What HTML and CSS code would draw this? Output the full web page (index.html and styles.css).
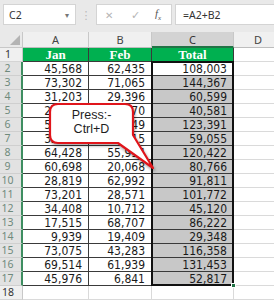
FILE: index.html
```html
<!DOCTYPE html>
<html>
<head>
<meta charset="utf-8">
<link rel="stylesheet" href="styles.css">
</head>
<body>
<div class="toolbar">
  <div class="namebox"><span class="ref">C2</span><span class="drop">▾</span></div>
  <div class="sep">⋮</div>
  <div class="fbtns"><span class="x">✕</span><span class="ok">✓</span><span class="fx">f<sub>x</sub></span></div>
  <div class="finput">=A2+B2</div>
</div>
<div class="sheet">
  <div class="corner"><svg width="10" height="10" viewBox="0 0 10 10"><path d="M10 0 L10 10 L0 10 Z" fill="#b4b4b4"/></svg></div>
  <div class="ch">A</div><div class="ch">B</div><div class="ch sel">C</div><div class="ch last">D</div>

  <div class="rh">1</div><div class="c hd">Jan</div><div class="c hd">Feb</div><div class="c hd">Total</div><div class="e"></div>

  <div class="rh s">2</div><div class="c">45,568</div><div class="c">62,435</div><div class="c t act">108,003</div><div class="e"></div>
  <div class="rh s">3</div><div class="c">73,302</div><div class="c">71,065</div><div class="c t">144,367</div><div class="e"></div>
  <div class="rh s">4</div><div class="c">31,203</div><div class="c">29,396</div><div class="c t">60,599</div><div class="e"></div>
  <div class="rh s">5</div><div class="c">20,011</div><div class="c">20,570</div><div class="c t">40,581</div><div class="e"></div>
  <div class="rh s">6</div><div class="c">57,342</div><div class="c">66,049</div><div class="c t">123,391</div><div class="e"></div>
  <div class="rh s">7</div><div class="c">32,140</div><div class="c">26,915</div><div class="c t">59,055</div><div class="e"></div>
  <div class="rh s">8</div><div class="c">64,428</div><div class="c">55,994</div><div class="c t">120,422</div><div class="e"></div>
  <div class="rh s">9</div><div class="c">60,698</div><div class="c">20,068</div><div class="c t">80,766</div><div class="e"></div>
  <div class="rh s">10</div><div class="c">28,819</div><div class="c">62,992</div><div class="c t">91,811</div><div class="e"></div>
  <div class="rh s">11</div><div class="c">73,201</div><div class="c">28,571</div><div class="c t">101,772</div><div class="e"></div>
  <div class="rh s">12</div><div class="c">34,408</div><div class="c">10,712</div><div class="c t">45,120</div><div class="e"></div>
  <div class="rh s">13</div><div class="c">17,515</div><div class="c">68,707</div><div class="c t">86,222</div><div class="e"></div>
  <div class="rh s">14</div><div class="c">9,939</div><div class="c">19,409</div><div class="c t">29,348</div><div class="e"></div>
  <div class="rh s">15</div><div class="c">73,075</div><div class="c">43,283</div><div class="c t">116,358</div><div class="e"></div>
  <div class="rh s">16</div><div class="c">69,514</div><div class="c">61,939</div><div class="c t">131,453</div><div class="e"></div>
  <div class="rh s">17</div><div class="c">45,976</div><div class="c">6,841</div><div class="c t">52,817</div><div class="e"></div>

  <div class="rh">18</div><div class="e"></div><div class="e"></div><div class="e"></div><div class="e"></div>

  <div class="selection"><div class="handle"></div></div>

  <div class="callout">
    <svg class="bubble" width="115" height="75" viewBox="0 0 115 75">
      <path d="M12 4 H79 Q87 4 87 12 V35 L107 68 L72 43 H12 Q4 43 4 35 V12 Q4 4 12 4 Z" fill="#ffffff" stroke="#e0151b" stroke-width="2.2" stroke-linejoin="round"/>
    </svg>
    <div class="ctext">Press:-<br>Ctrl+D</div>
  </div>
</div>
</body>
</html>
```

FILE: styles.css
```css
* { box-sizing: border-box; }
html, body { margin: 0; padding: 0; }
body {
  width: 274px;
  height: 300px;
  overflow: hidden;
  background: #ffffff;
  font-family: "Noto Sans", "DejaVu Sans", sans-serif;
}

.toolbar {
  height: 32px;
  background: #e9e9e9;
  display: flex;
  align-items: flex-start;
  padding: 4px 0 0 3px;
}
.namebox {
  width: 73px;
  height: 21px;
  background: #fff;
  border: 1px solid #d4d4d4;
  display: flex;
  align-items: center;
  justify-content: space-between;
  padding: 0 6px 0 5px;
  font-size: 10.5px;
  color: #333;
}
.drop { font-size: 8px; color: #777; }
.sep {
  width: 20px;
  height: 21px;
  display: flex;
  align-items: center;
  justify-content: center;
  color: #b8b8b8;
  font-size: 11px;
}
.fbtns {
  width: 76px;
  height: 21px;
  background: #fff;
  border: 1px solid #d4d4d4;
  display: flex;
  align-items: center;
  padding-left: 8px;
  font-size: 11px;
}
.fbtns .x { color: #b5b5b5; width: 26px; font-size: 10px; }
.fbtns .ok { color: #b5b5b5; width: 24px; font-size: 11px; }
.fbtns .fx { font-family: "Liberation Serif", serif; font-style: italic; color: #555; font-size: 11px; }
.fbtns .fx sub { font-size: 7px; }
.finput {
  flex: 1;
  margin-left: 3px;
  height: 21px;
  background: #fff;
  border: 1px solid #d4d4d4;
  border-right: none;
  display: flex;
  align-items: center;
  padding-left: 7px;
  font-size: 10.5px;
  color: #333;
}

.sheet {
  position: relative;
  display: grid;
  grid-template-columns: 23px 66px 63px 82px 48px;
  grid-template-rows: 16px repeat(18, 14px);
}

.corner {
  background: #e9e9e9;
  border-right: 1px solid #c8c8c8;
  border-bottom: 1px solid #c8c8c8;
  display: flex;
  align-items: flex-end;
  justify-content: flex-end;
  padding: 0 2px 2px 0;
}
.ch {
  background: #f0f0f0;
  border-right: 1px solid #c8c8c8;
  border-bottom: 1px solid #bdbdbd;
  font-size: 11px;
  color: #444;
  text-align: center;
  line-height: 15px;
}
.ch.sel {
  background: #d3d3d3;
  border-bottom: 2px solid #217346;
  color: #333;
}
.ch.last { border-right: none; }

.rh {
  background: #f0f0f0;
  border-right: 1px solid #c8c8c8;
  border-bottom: 1px solid #d4d4d4;
  font-size: 10.5px;
  color: #333;
  text-align: center;
  line-height: 13px;
  padding-right: 6px;
}
.rh.s {
  background: #e2e2e2;
  color: #6f8a7c;
  border-right: 2px solid #3e8e61;
  border-bottom-color: #cfcfcf;
}

.c {
  border-right: 1px solid #3a3a3a;
  border-bottom: 1px solid #3a3a3a;
  font-family: "DejaVu Sans Condensed", "DejaVu Sans", sans-serif;
  font-size: 12px;
  color: #1a1a1a;
  text-align: right;
  padding-right: 6px;
  line-height: 14px;
  white-space: nowrap;
}
.c.hd {
  background: #00b050;
  color: #fff;
  font-family: "Liberation Serif", serif;
  font-weight: bold;
  font-size: 13px;
  text-align: center;
  padding-right: 0;
  line-height: 14px;
}
.c.t { background: #c8c8c8; }
.c.t.act { background: #ffffff; }

.e {
  border-right: 1px solid #dadada;
  border-bottom: 1px solid #dadada;
}

.selection {
  position: absolute;
  left: 151px;
  top: 29px;
  width: 83px;
  height: 225px;
  border: 2px solid #111;
  pointer-events: none;
}
.handle {
  position: absolute;
  right: -4px;
  bottom: -4px;
  width: 5px;
  height: 5px;
  background: #217346;
  border: 1px solid #fff;
}

.callout {
  position: absolute;
  left: 46px;
  top: 68px;
  width: 115px;
  height: 75px;
}
.bubble {
  position: absolute;
  left: 0;
  top: 0;
  filter: drop-shadow(1px 2px 1.5px rgba(0,0,0,0.35));
}
.ctext {
  position: relative;
  width: 91px;
  padding-top: 9px;
  text-align: center;
  font-family: "Liberation Sans", Arial, sans-serif;
  font-size: 12.5px;
  line-height: 13.5px;
  color: #1e1e1e;
}
```
